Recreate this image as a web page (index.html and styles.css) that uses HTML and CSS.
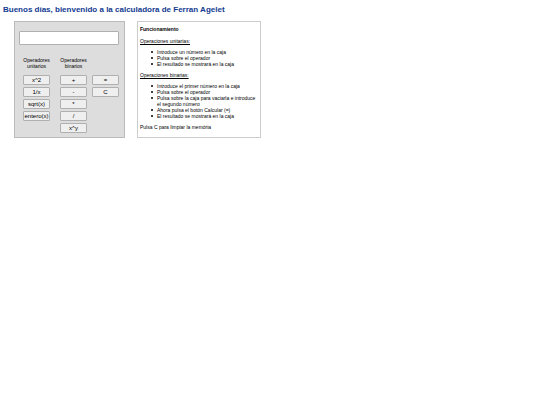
FILE: index.html
```html
<!DOCTYPE html>
<html lang="es">
<head>
  <meta charset="utf-8">
  <title>Calculadora</title>
  <link rel="stylesheet" href="styles.css">
</head>
<body>

  <h1>Buenos días, bienvenido a la calculadora de Ferran Agelet</h1>

  <div class="container">
    <div class="calculator">
      <input type="text" id="display" aria-label="Número" onfocus="this.value = ''">

      <div class="operators">
        <div class="column">
          <p>Operadores unitarios</p>
          <button onclick="unary('square')">x^2</button>
          <button onclick="unary('inverse')">1/x</button>
          <button onclick="unary('sqrt')">sqrt(x)</button>
          <button onclick="unary('integer')">entero(x)</button>
        </div>
        <div class="column">
          <p>Operadores binarios</p>
          <button onclick="binary('+')">+</button>
          <button onclick="binary('-')">-</button>
          <button onclick="binary('*')">*</button>
          <button onclick="binary('/')">/</button>
          <button onclick="binary('^')">x^y</button>
        </div>
        <div class="column actions">
          <button onclick="calculate()">=</button>
          <button onclick="clearAll()">C</button>
        </div>
      </div>
    </div>

    <div class="help">
      <h2>Funcionamiento</h2>
      <h3>Operaciones unitarias:</h3>
      <ul>
        <li>Introduce un número en la caja</li>
        <li>Pulsa sobre el operador</li>
        <li>El resultado se mostrará en la caja</li>
      </ul>
      <h3>Operaciones binarias:</h3>
      <ul>
        <li>Introduce el primer número en la caja</li>
        <li>Pulsa sobre el operador</li>
        <li>Pulsa sobre la caja para vaciarla e introduce el segundo número</li>
        <li>Ahora pulsa el botón Calcular (=)</li>
        <li>El resultado se mostrará en la caja</li>
      </ul>
      <p>Pulsa C para limpiar la memória</p>
    </div>
  </div>

  <script>
    const display = document.getElementById("display");
    let memory = 0;
    let operator = "";

    function unary(op) {
      const x = Number(display.value);
      if (op === "square") display.value = x * x;
      if (op === "inverse") display.value = 1 / x;
      if (op === "sqrt") display.value = Math.sqrt(x);
      if (op === "integer") display.value = Math.trunc(x);
    }

    function binary(op) {
      memory = Number(display.value);
      operator = op;
    }

    function calculate() {
      const y = Number(display.value);
      if (operator === "+") display.value = memory + y;
      if (operator === "-") display.value = memory - y;
      if (operator === "*") display.value = memory * y;
      if (operator === "/") display.value = memory / y;
      if (operator === "^") display.value = Math.pow(memory, y);
    }

    function clearAll() {
      memory = 0;
      operator = "";
      display.value = "";
    }
  </script>

</body>
</html>
```
FILE: styles.css
```css
* {
  box-sizing: border-box;
}

body {
  margin: 4px 3px;
  font-family: "Liberation Sans", Arial, sans-serif;
  font-size: 5px;
  line-height: 6px;
  color: #000;
}

h1 {
  margin: 0 0 6px;
  font-size: 8px;
  line-height: 11px;
  color: #123a90;
}

.container {
  display: flex;
  gap: 12px;
  margin-left: 11px;
}

.calculator {
  width: 111px;
  padding: 9px 5px 4px 4px;
  background: #ddd;
  border: 1px solid #bbb;
}

#display {
  display: block;
  width: 100%;
  height: 14px;
  padding: 1px 3px;
  font-size: 8px;
  background: white;
  border: 1px solid #b0b0b0;
  border-radius: 1px;
}

.operators {
  display: flex;
  margin-top: 12px;
  padding-left: 4px;
}

.column {
  display: flex;
  flex-direction: column;
  gap: 2px;
  width: 28px;
  margin-right: 10px;
}

.column + .column {
  margin-right: 5px;
}

.column p {
  margin: 0 0 4px;
  text-align: center;
}

.actions {
  padding-top: 18px;
}

.operators .actions {
  margin-right: 0;
}

button {
  height: 10px;
  padding: 0;
  font-family: inherit;
  font-size: 6px;
  line-height: 8px;
  color: #000;
  background: #efefef;
  border: 1px solid #b0b0b0;
  border-radius: 1px;
  white-space: nowrap;
  cursor: pointer;
}

.help {
  width: 124px;
  padding: 4px 2px;
  border: 1px solid #ccc;
}

h2,
h3 {
  margin: 0 0 6px;
  font-size: inherit;
}

h3 {
  margin-bottom: 5px;
  font-weight: normal;
  text-decoration: underline;
}

ul {
  margin: 0 0 5px;
  padding-left: 11px;
  list-style: none;
}

li {
  display: flex;
  gap: 4px;
}

li::before {
  content: "";
  flex: none;
  width: 2px;
  height: 2px;
  margin-top: 2px;
  border-radius: 50%;
  background: #000;
}

.help p {
  margin: 0;
}
```
